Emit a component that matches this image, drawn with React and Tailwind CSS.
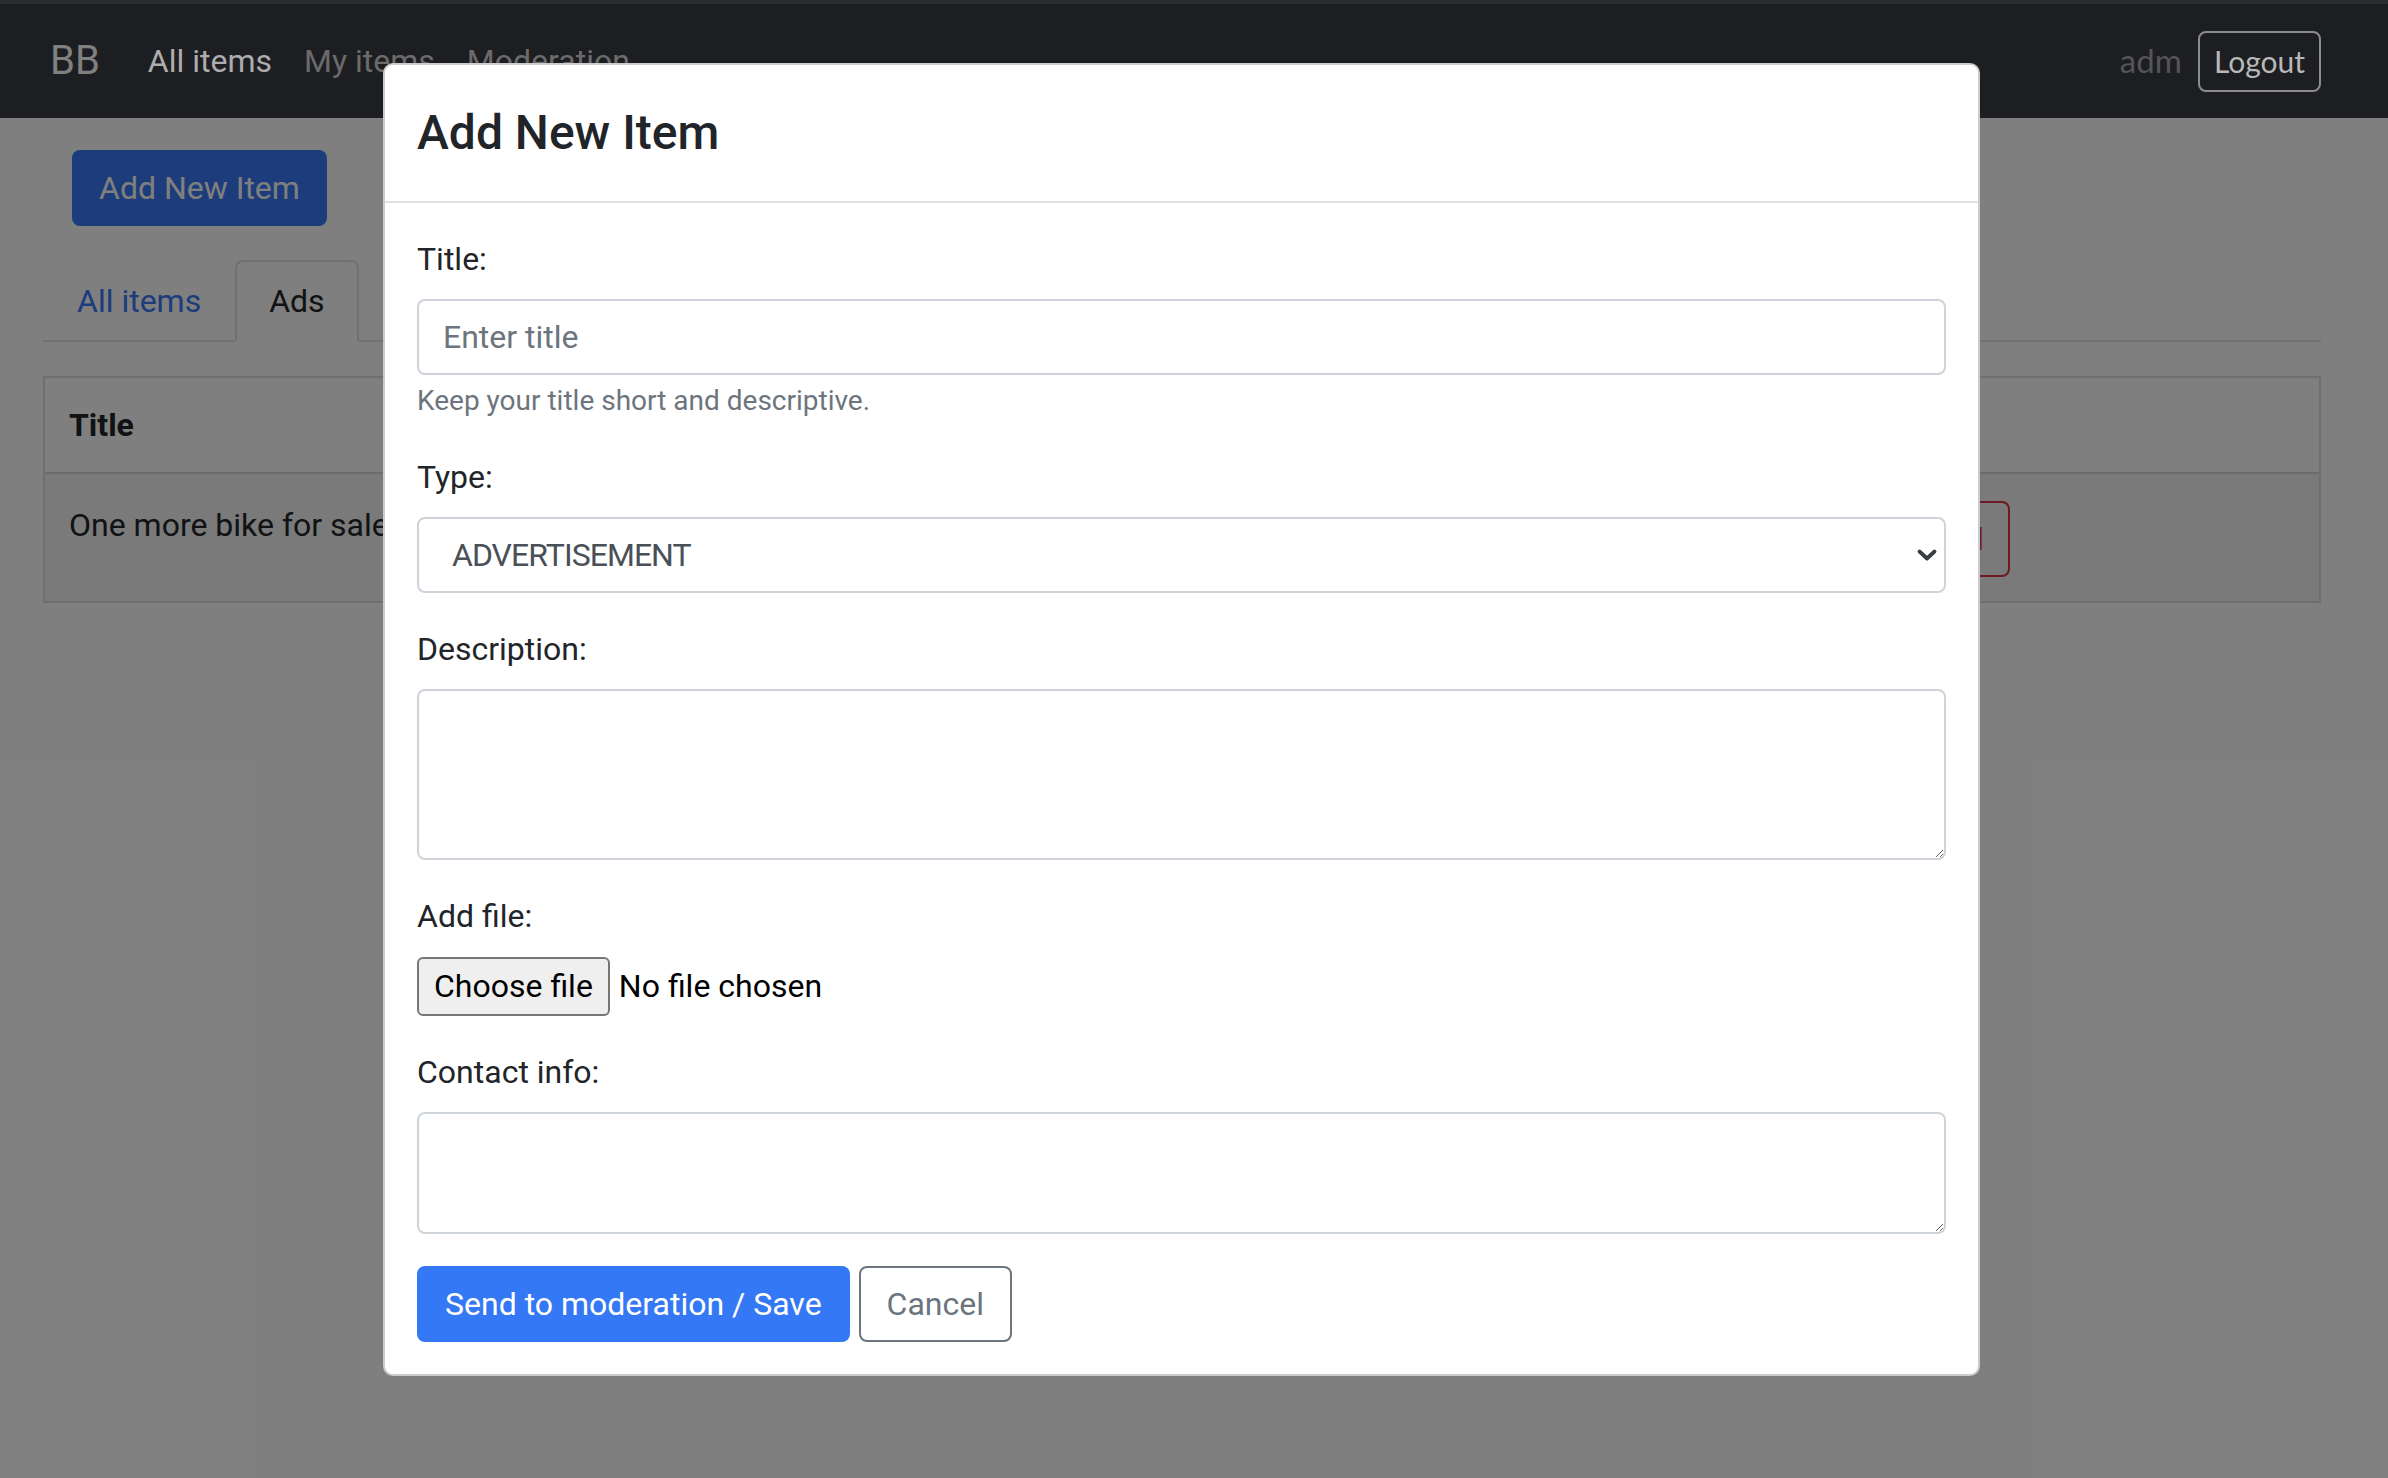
const label = 'block text-[32px] leading-[48px] text-[#212529] mb-[16px]'
const field =
  'block w-full border-2 border-[#ced4da] rounded-[8px] bg-white px-[24px] text-[32px] leading-[48px] text-[#212529] outline-none'

function NavBar() {
  return (
    <>
      <div className="h-[4px] bg-[#2c2d31]" />
      <nav className="h-[114px] bg-[#1d1e22] flex items-center pl-[50px] pr-[67px]">
        <span className="text-[40px] leading-[60px] text-[#808080] mr-[32px]">BB</span>
        <a className="px-[16px] text-[32px] leading-[48px] text-[#adadad]">All items</a>
        <a className="px-[16px] text-[32px] leading-[48px] text-[#6b6b6b]">My items</a>
        <a className="px-[16px] text-[32px] leading-[48px] text-[#6b6b6b]">Moderation</a>
        <div className="ml-auto flex items-center font-[Lato]">
          <span className="text-[33px] text-[#555555] mr-[16px]">adm</span>
          <button
            type="button"
            className="h-[61px] px-[14px] border-2 border-[#8c8c8c] rounded-[8px] text-[30px] text-[#b8b8b8]"
          >
            Logout
          </button>
        </div>
      </nav>
    </>
  )
}

function ItemsPage() {
  return (
    <main className="relative flex-1 bg-white pl-[43px] pr-[67px] pt-[32px]">
      <button
        type="button"
        className="ml-[29px] h-[76px] px-[27px] bg-[#3879f6] text-white text-[32px] leading-[48px] rounded-[8px]"
      >
        Add New Item
      </button>

      <ul className="mt-[34px] flex border-b-2 border-[#dee2e6]">
        <li className="-mb-[2px]">
          <a className="block border-2 border-transparent px-[32px] py-[15px] text-[32px] leading-[48px] text-[#3879f6]">
            All items
          </a>
        </li>
        <li className="-mb-[2px]">
          <a className="block border-2 border-[#dee2e6] border-b-white rounded-t-[8px] bg-white px-[32px] py-[15px] text-[32px] leading-[48px] text-[#212529]">
            Ads
          </a>
        </li>
      </ul>

      <div className="mt-[34px] border-2 border-[#dedede] text-[32px] leading-[48px] text-[#212529]">
        <div className="flex border-b-2 border-[#d6d6d6]">
          <div className="flex-1 px-[24px] py-[23px] font-bold">Title</div>
          <div className="w-[600px] px-[24px] py-[23px] font-bold">Type</div>
          <div className="w-[309px]" />
        </div>
        <div className="flex bg-[#f4f4f4]">
          <div className="flex-1 px-[24px] pt-[27px] pb-[24px]">One more bike for sale</div>
          <div className="px-[24px] pt-[27px] pb-[24px] flex gap-[8px]">
            <button
              type="button"
              className="h-[76px] px-[24px] border-2 border-[#dc3545] text-[#dc3545] rounded-[8px]"
            >
              Cancel
            </button>
          </div>
          <div className="w-[285px]" />
        </div>
      </div>

      <div className="absolute inset-0 bg-black/50" />
    </main>
  )
}

function AddItemModal() {
  return (
    <div className="absolute left-[383px] top-[63px] w-[1597px] z-20 bg-white border-2 border-black/20 rounded-[10px]">
      <div className="p-[32px] border-b-2 border-[#dee2e6]">
        <h4 className="text-[48px] leading-[72px] font-medium text-[#212529]">Add New Item</h4>
      </div>

      <form className="p-[32px]" onSubmit={(e) => e.preventDefault()}>
        <div className="mb-[32px]">
          <label className={label}>Title:</label>
          <input
            type="text"
            placeholder="Enter title"
            className={`${field} h-[76px] py-[12px] placeholder:text-[#6c757d]`}
          />
          <p className="mt-[6px] text-[28px] leading-[40px] text-[#6c757d]">
            Keep your title short and descriptive.
          </p>
        </div>

        <div className="mb-[32px]">
          <label className={label}>Type:</label>
          <div className="relative">
            <select
              defaultValue="ADVERTISEMENT"
              className={`${field} h-[76px] appearance-none pl-[33px] tracking-[-0.03em] text-[#495057]`}
            >
              <option>ADVERTISEMENT</option>
              <option>ANNOUNCEMENT</option>
            </select>
            <svg
              className="absolute right-[8px] top-1/2 -translate-y-1/2 pointer-events-none"
              width="22"
              height="14"
              viewBox="0 0 22 14"
            >
              <path d="M3.5 3.5 L11 10.5 L18.5 3.5" fill="none" stroke="#3a3d42" strokeWidth="3.8" strokeLinecap="round" strokeLinejoin="round" />
            </svg>
          </div>
        </div>

        <div className="mb-[32px]">
          <label className={label}>Description:</label>
          <textarea className={`${field} h-[171px] py-[12px]`} />
        </div>

        <div className="mb-[32px]">
          <label className={label}>Add file:</label>
          <div className="flex items-center h-[60px] gap-[9px] text-[32px] text-black">
            <span className="h-[59px] px-[15px] flex items-center bg-[#efefef] border-2 border-[#767676] rounded-[6px]">
              Choose file
            </span>
            <span>No file chosen</span>
          </div>
        </div>

        <div className="mb-[32px]">
          <label className={label}>Contact info:</label>
          <textarea className={`${field} h-[122px] py-[12px]`} />
        </div>

        <div className="flex gap-[9px]">
          <button
            type="submit"
            className="h-[76px] px-[26px] border-2 border-[#3478f6] bg-[#3478f6] text-white text-[32px] leading-[48px] rounded-[8px]"
          >
            Send to moderation / Save
          </button>
          <button
            type="button"
            className="h-[76px] px-[26px] border-2 border-[#6c757d] bg-white text-[#6c757d] text-[32px] leading-[48px] rounded-[8px]"
          >
            Cancel
          </button>
        </div>
      </form>
    </div>
  )
}

export default function App() {
  return (
    <div className="relative h-[1478px] w-full flex flex-col overflow-hidden font-[Roboto,sans-serif]">
      <NavBar />
      <ItemsPage />
      <AddItemModal />
    </div>
  )
}
